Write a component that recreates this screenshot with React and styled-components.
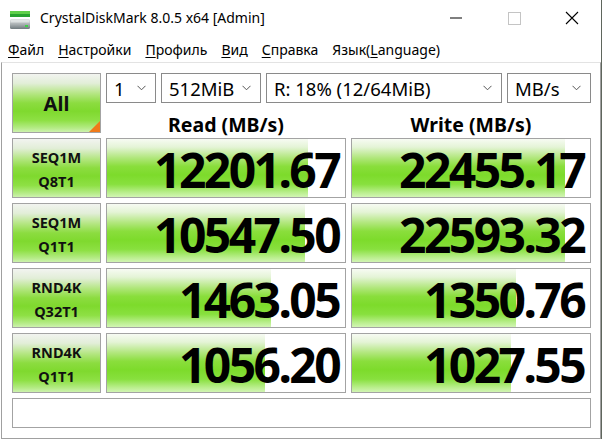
import React from 'react';
import styled, { createGlobalStyle } from 'styled-components';

const Global = createGlobalStyle`
  html, body { margin: 0; padding: 0; background: #5f665d; }
  body { font-family: "Noto Sans", "Open Sans", sans-serif; color: #000; }
  #root { width: 602px; height: 439px; overflow: hidden; }
`;

const GREEN = `linear-gradient(180deg, #f7fbf3 0%, #e4f4d6 14%, #b2e77e 32%, #8ade3c 47%, #7ddb2b 62%, #88e03e 78%, #b9ee8c 92%, #d2f5b4 100%)`;

const Window = styled.div`
  width: 601px;
  height: 439px;
  background: #fff;
  display: flex;
  flex-direction: column;
`;

const TitleBar = styled.div`
  height: 36px;
  display: flex;
  align-items: center;
  flex-shrink: 0;
`;

const AppIcon = styled.svg`
  width: 22px;
  height: 22px;
  margin-left: 9px;
  margin-right: 9px;
  flex-shrink: 0;
`;

const TitleText = styled.div`
  font-size: 14px;
  color: #000;
  flex: 1;
  white-space: nowrap;
  padding-bottom: 1px;
`;

const Caption = styled.div`
  width: 58px;
  height: 36px;
  display: flex;
  align-items: center;
  justify-content: center;
`;

const MenuBar = styled.div`
  height: 26px;
  display: flex;
  align-items: center;
  padding-left: 1px;
  flex-shrink: 0;
`;

const MenuItem = styled.div`
  font-size: 14px;
  padding: 0 7px;
  white-space: nowrap;
  u { text-decoration: underline; text-underline-offset: 2px; }
`;

const Client = styled.div`
  flex: 1;
  border-top: 1px solid #e3e3e3;
  border-left: 1px solid #a0a0a0;
  border-right: 1px solid #a0a0a0;
  border-bottom: 1px solid #a0a0a0;
  margin-left: 1px;
  padding: 10px 9px 9px 10px;
  display: flex;
  flex-direction: column;
  gap: 5px;
  background: #fff;
`;

const TopRow = styled.div`
  display: grid;
  grid-template-columns: 89px 485px;
  column-gap: 5px;
  height: 60px;
`;

const TestButton = styled.div`
  position: relative;
  box-sizing: border-box;
  border: 1px solid #a3a3a3;
  background: linear-gradient(180deg, #f2f4f0 0%, #e2eed8 16%, #b4e682 34%, #8cdc40 50%, #7fd92e 64%, #8ee044 80%, #b4eb85 93%, #cdf2ae 100%);
  display: flex;
  flex-direction: column;
  align-items: center;
  justify-content: center;
  font-weight: 700;
  font-size: ${(p) => (p.$big ? '20px' : '14.5px')};
  line-height: 24px;
  padding-top: 1px;
  color: #111;
  ${(p) =>
    p.$corner &&
    `&::after {
      content: '';
      position: absolute;
      right: 0;
      bottom: 0;
      border-style: solid;
      border-width: 0 0 11px 11px;
      border-color: transparent transparent #f07a1a transparent;
    }`}
`;

const RightTop = styled.div`
  display: flex;
  flex-direction: column;
`;

const ComboRow = styled.div`
  display: flex;
  gap: 5px;
  height: 30px;
`;

const Combo = styled.div`
  box-sizing: border-box;
  width: ${(p) => p.$w}px;
  height: 30px;
  border: 1px solid #8a8a8a;
  background: #fff;
  display: flex;
  align-items: center;
  justify-content: space-between;
  padding: 0 9px 0 7px;
  font-size: 18.5px;
  white-space: nowrap;
`;

const Chevron = styled.svg`
  width: 9px;
  height: 6px;
  flex-shrink: 0;
`;

const HeaderRow = styled.div`
  display: grid;
  grid-template-columns: 240px 240px;
  column-gap: 5px;
  height: 30px;
`;

const Header = styled.div`
  display: flex;
  align-items: flex-end;
  justify-content: center;
  font-weight: 700;
  font-size: 19.5px;
  line-height: 16px;
`;

const ResultRow = styled.div`
  display: grid;
  grid-template-columns: 89px 240px 240px;
  column-gap: 5px;
  height: 60px;
`;

const ValueBox = styled.div`
  box-sizing: border-box;
  border: 1px solid #a3a3a3;
  background: ${GREEN} no-repeat, #fff;
  display: flex;
  align-items: center;
  justify-content: flex-end;
  padding: 3px 6px 0 0;
  font-weight: 700;
  font-size: 48px;
  letter-spacing: -2.6px;
  line-height: 1;
  color: #000;
`;

const CommentBox = styled.div`
  box-sizing: border-box;
  height: 30px;
  border: 1px solid #a3a3a3;
  background: #fff;
`;

const ChevronIcon = () => (
  <Chevron viewBox="0 0 9 6">
    <polyline points="0.5,0.8 4.5,4.8 8.5,0.8" fill="none" stroke="#555" strokeWidth="1" />
  </Chevron>
);

const rows = [
  { a: 'SEQ1M', b: 'Q8T1', r: '12201.67', rp: 84.5, w: '22455.17', wp: 89.5 },
  { a: 'SEQ1M', b: 'Q1T1', r: '10547.50', rp: 83.2, w: '22593.32', wp: 89.5 },
  { a: 'RND4K', b: 'Q32T1', r: '1463.05', rp: 69.0, w: '1350.76', wp: 69.0 },
  { a: 'RND4K', b: 'Q1T1', r: '1056.20', rp: 66.4, w: '1027.55', wp: 66.8 },
];

export default function App() {
  return (
    <>
      <Global />
      <Window>
        <TitleBar>
          <AppIcon viewBox="0 0 22 22">
            <defs>
              <linearGradient id="gdisk" x1="0" y1="0" x2="0" y2="1">
                <stop offset="0" stopColor="#d8dcdc" />
                <stop offset="0.5" stopColor="#aeb4b6" />
                <stop offset="1" stopColor="#6f7a7e" />
              </linearGradient>
            </defs>
            <rect x="1" y="4" width="20" height="3" fill="#5fd04a" />
            <rect x="1" y="7" width="20" height="3" fill="#27a32f" />
            <rect x="1" y="12" width="20" height="10" rx="1.5" fill="url(#gdisk)" />
            <rect x="1.5" y="12.5" width="19" height="3" fill="#e8ecec" opacity="0.7" />
            <rect x="16" y="18" width="3" height="2" fill="#3fd04a" />
          </AppIcon>
          <TitleText>CrystalDiskMark 8.0.5 x64 [Admin]</TitleText>
          <Caption>
            <svg width="12" height="2" viewBox="0 0 12 2">
              <rect x="0" y="0.5" width="12" height="1" fill="#000" />
            </svg>
          </Caption>
          <Caption>
            <svg width="13" height="13" viewBox="0 0 13 13">
              <rect x="0.5" y="0.5" width="12" height="12" fill="none" stroke="#c4c4c4" strokeWidth="1" />
            </svg>
          </Caption>
          <Caption>
            <svg width="14" height="14" viewBox="0 0 14 14">
              <path d="M1 1 L13 13 M13 1 L1 13" stroke="#000" strokeWidth="1.1" />
            </svg>
          </Caption>
        </TitleBar>
        <MenuBar>
          <MenuItem><u>Ф</u>айл</MenuItem>
          <MenuItem><u>Н</u>астройки</MenuItem>
          <MenuItem><u>П</u>рофиль</MenuItem>
          <MenuItem><u>В</u>ид</MenuItem>
          <MenuItem><u>С</u>правка</MenuItem>
          <MenuItem>Язык(<u>L</u>anguage)</MenuItem>
        </MenuBar>
        <Client>
          <TopRow>
            <TestButton $big $corner>All</TestButton>
            <RightTop>
              <ComboRow>
                <Combo $w={50}>1<ChevronIcon /></Combo>
                <Combo $w={100}>512MiB<ChevronIcon /></Combo>
                <Combo $w={236}>R: 18% (12/64MiB)<ChevronIcon /></Combo>
                <Combo $w={84}>MB/s<ChevronIcon /></Combo>
              </ComboRow>
              <HeaderRow>
                <Header>Read (MB/s)</Header>
                <Header>Write (MB/s)</Header>
              </HeaderRow>
            </RightTop>
          </TopRow>
          {rows.map((row, i) => (
            <ResultRow key={i}>
              <TestButton>
                <div>{row.a}</div>
                <div>{row.b}</div>
              </TestButton>
              <ValueBox style={{ backgroundSize: `${row.rp}% 100%, auto` }}>{row.r}</ValueBox>
              <ValueBox style={{ backgroundSize: `${row.wp}% 100%, auto` }}>{row.w}</ValueBox>
            </ResultRow>
          ))}
          <CommentBox />
        </Client>
      </Window>
    </>
  );
}
